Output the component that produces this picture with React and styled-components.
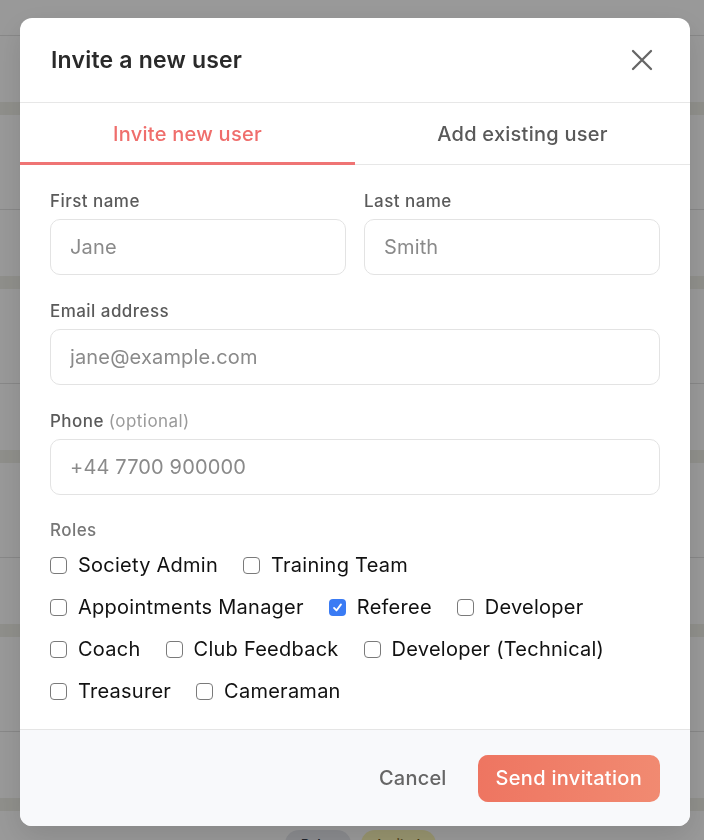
import React, { useState } from "react";
import styled, { createGlobalStyle } from "styled-components";

const GlobalStyle = createGlobalStyle`
  * { box-sizing: border-box; }
  html, body { margin: 0; padding: 0; }
  body {
    font-family: "Inter", "Noto Sans", "Liberation Sans", sans-serif;
    background: #ffffff;
    overflow: hidden;
  }
`;

/* ---------- page behind the dialog ---------- */

const Page = styled.div`
  height: 840px;
  padding-top: 35px;
  overflow: hidden;
`;

const ListRow = styled.div`
  height: 174px;
  border-top: 1px solid #e2e2e2;
  display: flex;
  flex-direction: column;
`;

const RowBand = styled.div`
  margin-top: 66px;
  height: 13px;
  background: #efefe8;
`;

const PillRow = styled.div`
  margin-top: 19px;
  display: flex;
  gap: 10px;
  padding-left: 285px;
`;

const Pill = styled.span`
  display: inline-flex;
  align-items: center;
  height: 28px;
  padding: 0 16px;
  border-radius: 14px;
  font-size: 13px;
  font-weight: 600;
  background: ${(p) => (p.$tone === "warn" ? "#fbf6b8" : "#e6e8ee")};
  color: ${(p) => (p.$tone === "warn" ? "#7a5a10" : "#333a48")};
`;

/* ---------- dialog ---------- */

const Overlay = styled.div`
  position: fixed;
  inset: 0;
  background: rgba(0, 0, 0, 0.4);
  padding: 18px 14px 14px 20px;
`;

const Dialog = styled.div`
  width: 670px;
  background: #ffffff;
  border-radius: 12px;
  overflow: hidden;
  box-shadow: 0 10px 30px rgba(0, 0, 0, 0.12);
`;

const Header = styled.div`
  height: 85px;
  display: flex;
  align-items: center;
  justify-content: space-between;
  padding: 0 37px 0 31px;
  border-bottom: 1px solid #e7e7e7;
`;

const Title = styled.h2`
  margin: 0;
  font-size: 23px;
  font-weight: 600;
  color: #2a2a2a;
  letter-spacing: 0.2px;
`;

const CloseButton = styled.button`
  border: 0;
  background: none;
  padding: 0;
  display: flex;
  cursor: pointer;
  color: #666666;
`;

const Tabs = styled.div`
  display: grid;
  grid-template-columns: 1fr 1fr;
  border-bottom: 1px solid #e7e7e7;
`;

const Tab = styled.button`
  height: 62px;
  border: 0;
  background: none;
  font-family: inherit;
  font-size: 20px;
  font-weight: 500;
  letter-spacing: 0.25px;
  cursor: pointer;
  color: ${(p) => (p.$active ? "#ef6e6c" : "#595959")};
  box-shadow: ${(p) => (p.$active ? "inset 0 -3px 0 #ef7474" : "none")};
  margin-bottom: -1px;
  padding: 0;
`;

const Body = styled.div`
  padding: 26px 30px 25px 30px;
  display: flex;
  flex-direction: column;
  gap: 26px;
`;

const TwoCols = styled.div`
  display: grid;
  grid-template-columns: 1fr 1fr;
  gap: 18px;
`;

const Field = styled.label`
  display: flex;
  flex-direction: column;
  gap: 8px;
`;

const FieldLabel = styled.span`
  font-size: 17px;
  line-height: 20px;
  font-weight: 500;
  letter-spacing: 0.45px;
  color: ${(p) => (p.$muted ? "#777777" : "#5a5a5a")};
`;

const Hint = styled.span`
  font-weight: 400;
  color: #9a9a9a;
`;

const TextInput = styled.input`
  height: 56px;
  width: 100%;
  border: 1px solid #e3e3e3;
  border-radius: 10px;
  padding: 0 19px;
  font-family: inherit;
  font-size: 20px;
  letter-spacing: 0.15px;
  color: #222;
  background: #fff;
  outline: none;
  &::placeholder {
    color: #8a8a8a;
  }
`;

const RolesGroup = styled.div`
  display: flex;
  flex-direction: column;
  gap: 12px;
  margin-top: -1px;
`;

const RoleList = styled.div`
  display: flex;
  flex-wrap: wrap;
  column-gap: 25px;
  row-gap: 16px;
`;

const RoleItem = styled.label`
  display: inline-flex;
  align-items: center;
  gap: 11px;
  height: 26px;
  font-size: 20px;
  letter-spacing: 0.25px;
  color: #111111;
  cursor: pointer;
  white-space: nowrap;
`;

const HiddenCheck = styled.input`
  display: none;
`;

const Box = styled.span`
  width: 17px;
  height: 17px;
  border-radius: 4px;
  flex-shrink: 0;
  display: inline-flex;
  align-items: center;
  justify-content: center;
  border: ${(p) => (p.$checked ? "none" : "1.5px solid #7a7a7a")};
  background: ${(p) => (p.$checked ? "#3a7bf4" : "#ffffff")};
`;

const Footer = styled.div`
  height: 97px;
  background: #f8f9fb;
  border-top: 1px solid #e5e5e5;
  display: flex;
  align-items: center;
  justify-content: flex-end;
  gap: 31px;
  padding: 0 30px;
`;

const GhostButton = styled.button`
  border: 0;
  background: none;
  padding: 0;
  font-family: inherit;
  font-size: 20px;
  font-weight: 500;
  letter-spacing: 0.2px;
  color: #666666;
  cursor: pointer;
`;

const PrimaryButton = styled.button`
  height: 47px;
  padding: 0 18px;
  border: 0;
  border-radius: 10px;
  background: linear-gradient(90deg, #ee7561, #f18a71);
  color: #ffffff;
  font-family: inherit;
  font-size: 20px;
  font-weight: 500;
  letter-spacing: 0.3px;
  cursor: pointer;
`;

const ROLES = [
  "Society Admin",
  "Training Team",
  "Appointments Manager",
  "Referee",
  "Developer",
  "Coach",
  "Club Feedback",
  "Developer (Technical)",
  "Treasurer",
  "Cameraman",
];

function CloseIcon() {
  return (
    <svg width="22" height="22" viewBox="0 0 22 22" fill="none">
      <path
        d="M2 2L20 20M20 2L2 20"
        stroke="currentColor"
        strokeWidth="2.3"
        strokeLinecap="round"
      />
    </svg>
  );
}

function Role({ name, checked, onToggle }) {
  return (
    <RoleItem>
      <HiddenCheck type="checkbox" checked={checked} onChange={onToggle} />
      <Box $checked={checked}>
        {checked && (
          <svg width="11" height="11" viewBox="0 0 12 12" fill="none">
            <path
              d="M2.2 6.4L4.9 9.2L9.8 2.6"
              stroke="#fff"
              strokeWidth="2"
              strokeLinecap="round"
              strokeLinejoin="round"
            />
          </svg>
        )}
      </Box>
      {name}
    </RoleItem>
  );
}

export default function App() {
  const [tab, setTab] = useState("invite");
  const [roles, setRoles] = useState({ Referee: true });

  const toggle = (name) =>
    setRoles((r) => ({ ...r, [name]: !r[name] }));

  return (
    <>
      <GlobalStyle />
      <Page>
        {[0, 1, 2, 3, 4].map((i) => (
          <ListRow key={i}>
            <RowBand />
            <PillRow>
              <Pill>Roles</Pill>
              <Pill $tone="warn">Invited</Pill>
            </PillRow>
          </ListRow>
        ))}
      </Page>

      <Overlay>
        <Dialog role="dialog" aria-label="Invite a new user">
          <Header>
            <Title>Invite a new user</Title>
            <CloseButton aria-label="Close">
              <CloseIcon />
            </CloseButton>
          </Header>

          <Tabs>
            <Tab $active={tab === "invite"} onClick={() => setTab("invite")}>
              Invite new user
            </Tab>
            <Tab $active={tab === "existing"} onClick={() => setTab("existing")}>
              Add existing user
            </Tab>
          </Tabs>

          <Body>
            <TwoCols>
              <Field>
                <FieldLabel>First name</FieldLabel>
                <TextInput placeholder="Jane" />
              </Field>
              <Field>
                <FieldLabel>Last name</FieldLabel>
                <TextInput placeholder="Smith" />
              </Field>
            </TwoCols>

            <Field>
              <FieldLabel>Email address</FieldLabel>
              <TextInput type="email" placeholder="jane@example.com" />
            </Field>

            <Field>
              <FieldLabel>
                Phone <Hint>(optional)</Hint>
              </FieldLabel>
              <TextInput type="tel" placeholder="+44 7700 900000" />
            </Field>

            <RolesGroup>
              <FieldLabel $muted>Roles</FieldLabel>
              <RoleList>
                {ROLES.map((name) => (
                  <Role
                    key={name}
                    name={name}
                    checked={!!roles[name]}
                    onToggle={() => toggle(name)}
                  />
                ))}
              </RoleList>
            </RolesGroup>
          </Body>

          <Footer>
            <GhostButton>Cancel</GhostButton>
            <PrimaryButton>Send invitation</PrimaryButton>
          </Footer>
        </Dialog>
      </Overlay>
    </>
  );
}
